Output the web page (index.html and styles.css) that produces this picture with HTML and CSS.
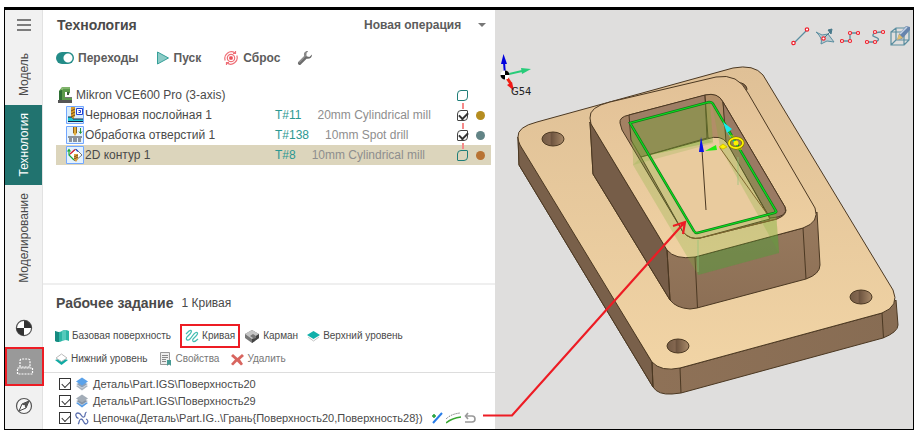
FILE: index.html
```html
<!DOCTYPE html>
<html lang="ru">
<head>
<meta charset="utf-8">
<title>Технология</title>
<link rel="stylesheet" href="styles.css">
</head>
<body>
<div class="app">
  <nav class="sidebar">
    <button class="menu" aria-label="Меню"><svg width="16" height="14" viewBox="0 0 16 14"><path d="M1 2h14M1 7h14M1 12h14" stroke="#555" stroke-width="1.6"/></svg></button>
    <button class="tab tab-model"><span>Модель</span></button>
    <button class="tab tab-tech active"><span>Технология</span></button>
    <button class="tab tab-sim"><span>Моделирование</span></button>
    <div class="tools">
      <button class="tool" aria-label="Система координат"><svg width="18" height="18" viewBox="0 0 18 18"><circle cx="9" cy="9" r="7.6" fill="#fff" stroke="#555" stroke-width="1.2"/><path d="M9 9V1.4A7.6 7.6 0 0 1 16.600 9ZM9 9v7.600A7.600 7.600 0 0 1 1.400 9Z" fill="#333"/></svg></button>
      <button class="tool current" aria-label="Рабочее задание"><svg width="18" height="20" viewBox="0 0 18 20" fill="none" stroke="#fff" stroke-width="1.200" stroke-dasharray="2 1"><path d="M4 10V4q0-2 2-2h6q2 0 2 2v6z"/><path d="M1.500 11h15v6h-15z"/></svg></button>
      <button class="tool" aria-label="Навигация"><svg width="18" height="18" viewBox="0 0 18 18"><circle cx="9" cy="9" r="7.500" fill="#f7f7f7" stroke="#555" stroke-width="1.200"/><path d="M14 4 11 11 4 14 7 7Z" fill="#fff" stroke="#444"/><path d="M14 4 11 11 7 7Z" fill="#555"/><circle cx="9" cy="9" r="1" fill="#fff"/></svg></button>
    </div>
  </nav>

  <main class="panel">
    <section class="operations">
      <header class="head">
        <h1>Технология</h1>
        <label class="new-op">
          <select aria-label="Новая операция"><option>Новая операция</option></select>
          <svg width="8" height="4" viewBox="0 0 8 4"><path d="M0 0h8L4 4Z" fill="#777"/></svg>
        </label>
      </header>
      <div class="actions">
        <label class="action"><input type="checkbox" class="switch" checked>Переходы</label>
        <button class="action"><svg width="14" height="14" viewBox="0 0 14 14"><path d="M1.500 1v12l11-6Z" fill="#8ccbc6" stroke="#35a099"/></svg>Пуск</button>
        <button class="action reset"><svg width="16" height="16" viewBox="0 0 16 16" fill="none" stroke="#ef7078" stroke-width="1.200"><path d="M2.200 10.500A6.500 6.500 0 0 1 12 3M13.800 5.500A6.500 6.500 0 0 1 4 13"/><circle cx="8" cy="8" r="3.700"/><circle cx="8" cy="8" r="1.500" fill="#e9434f"/><path d="M12.500 1v2.500H10M3.500 15v-2.500H6"/></svg>Сброс</button>
        <button class="action" aria-label="Настройки"><svg width="16" height="16" viewBox="0 0 16 16"><path d="M11 1C8 .8 6.300 3.500 7.200 6L1 12.200Q.4 15 3.300 15L9.600 8.700C12.500 9.400 15.200 7.500 15 4.500L12.300 7 9.500 6.200 9.300 3.700Z" fill="#6c6c6c"/><path d="M10 2C8 2.500 7.500 4 8.200 6.200L2 12.600" stroke="#aaa" fill="none"/></svg></button>
      </div>

      <ul class="tree">
        <li class="row machine">
          <svg class="pic" width="17" height="18" viewBox="0 0 17 18"><path d="M2 5 5 1h8v6l-2 1V6H8v6h7v3H2Z" fill="#5b9a4b"/><path d="M2 5 5 4v11H2Z" fill="#2e6f34"/><path d="M5 4V2h8" stroke="#a5cd8c" fill="none"/><path d="M1 14h14v3H1z" fill="#555"/><path d="M8 11h7v1H8z" fill="#777"/><path d="M10 6h2v3h-2z" fill="#385d3a"/></svg>
          <span class="name">Mikron VCE600 Pro (3-axis)</span>
          <span class="tooling"></span>
          <input type="checkbox" class="leaf" aria-label="Mikron VCE600 Pro">
        </li>
        <li class="row">
          <svg class="pic" width="18" height="18" viewBox="0 0 18 18"><path d="M.5.5h17v17H.500z" fill="#d9edfc" stroke="#72a7ff"/><path d="M2 15V11h5v2h10v2Z" fill="#20c8d4"/><path d="M2 11h5v2h10M2 15.500h15" stroke="#124" fill="none"/><path d="M10.500 2.500h6v6h-6z" fill="#fff" stroke="#2340d0"/><path d="M12.500 4.500h2v2h-2" stroke="#2340d0" fill="none"/><path d="M5 1h4v9l-2 3-2-3Z" fill="#d89b2b"/><path d="m5 5 4-2M5 8l4-2M5 11l4-2" stroke="#76501e"/></svg>
          <span class="name">Черновая послойная 1</span>
          <span class="tooling"><b>T#11</b>20mm Cylindrical mill</span>
          <input type="checkbox" class="leaf linked" checked aria-label="Черновая послойная 1">
          <i class="dot gold"></i>
        </li>
        <li class="row">
          <svg class="pic" width="18" height="18" viewBox="0 0 18 18"><path d="M.5.500h17v17H.500z" fill="#e4f2fd" stroke="#72a7ff"/><path d="M2 10h14v2h-1v4h-3v-4h-1v4H7v-4H6v4H3v-4H2Z" fill="#8b929b"/><path d="M7 1h4v6l-2 3-2-3Z" fill="#dfac3b"/><path d="M7.500 1v6M10.500 1v6" stroke="#8a601e"/><path d="M14.500 2v5m-1.500-1.500 1.500 2 1.500-2" stroke="#26953b" fill="none"/></svg>
          <span class="name">Обработка отверстий 1</span>
          <span class="tooling"><b>T#138</b>10mm Spot drill</span>
          <input type="checkbox" class="leaf linked" checked aria-label="Обработка отверстий 1">
          <i class="dot slate"></i>
        </li>
        <li class="row selected">
          <svg class="pic" width="18" height="18" viewBox="0 0 18 18"><path d="M.5.500h17v17H.500z" fill="#e4f2fd" stroke="#72a7ff"/><path d="M3 9 10 3l6 6-7 6Z" fill="#fff" stroke="#555" stroke-width=".8"/><path d="M3 4v5l5 5M1.500 5.500 3 3.500l1.500 2" fill="none" stroke="#18a83c" stroke-width="1.200"/><path d="m4 8 5-4.500" stroke="#d23" stroke-width="1.200"/><path d="m10 3.500 2 2" stroke="#2450d0" stroke-width="1.300"/><path d="M8 8h4v5l-2 3-2-3Z" fill="#dfa03b"/><path d="m8 11 4-2m-4 4 4-2" stroke="#76501e"/></svg>
          <span class="name">2D контур 1</span>
          <span class="tooling"><b>T#8</b>10mm Cylindrical mill</span>
          <input type="checkbox" class="leaf linked" aria-label="2D контур 1">
          <i class="dot copper"></i>
        </li>
      </ul>
    </section>

    <section class="job">
      <header class="job-head"><h2>Рабочее задание</h2><span>1 Кривая</span></header>
      <div class="commands">
        <button class="cmd"><svg width="14" height="14" viewBox="0 0 14 14"><path d="M0 2q4 2 7 0t7 0v10q-4-2-7 0t-7 0Z" fill="#2db5a5"/><path d="M0 2q2 1 4 .900v10Q2 13 0 12Z" fill="#168a80"/><path d="M7 2q2-1.500 4-1v10q-2 0-4 1Z" fill="#55cabc"/></svg>Базовая поверхность</button>
        <button class="cmd marked"><svg width="14" height="14" viewBox="0 0 14 14"><path d="M1 5 4 2C7 0 7 3 5 5L2 8C0 11 3 12 5 10L9 5C12 2 14 4 11 7L8 10C7 13 9 14 13 10" fill="none" stroke="#45bdb2" stroke-width="1.200"/></svg>Кривая</button>
        <button class="cmd pocket"><svg width="15" height="14" viewBox="0 0 15 14"><path d="M0 5 7 1l7 4v4l-7 5-7-5Z" fill="#777"/><path d="M0 5 7 1l7 4-3 2-3-2-3 2 3 2-1 1Z" fill="#c5c5c5"/><path d="M7 10v4l7-5V5l-3 2v2l-3 1Z" fill="#444"/></svg>Карман</button>
        <button class="cmd"><svg width="13" height="12" viewBox="0 0 13 12"><path d="m1 7 5.500 4L12 7" fill="#fff" stroke="#c4c4c4"/><path d="M0 5 6.500 1 13 5 6.500 9Z" fill="#10b0aa"/></svg>Верхний уровень</button>
      </div>
      <div class="commands">
        <button class="cmd"><svg width="13" height="12" viewBox="0 0 13 12"><path d="m0 7 6.500-2L13 7l-6.500 5Z" fill="#10aaa3"/><path d="m1 5 5.500-4L12 5 6.500 8.500Z" fill="#fff" stroke="#bbb"/></svg>Нижний уровень</button>
        <button class="cmd dim"><svg width="13" height="14" viewBox="0 0 13 14"><path d="M1.500.500h9v12h-9z" fill="#eee" stroke="#999"/><path d="M3 3.500h6M3 5.500h6M3 7.500h4M3 9.500h4" stroke="#888"/><path d="M8 8h4v6l-2-2-2 2Z" fill="#479b94"/></svg>Свойства</button>
        <button class="cmd dim"><svg width="13" height="13" viewBox="0 0 13 13"><path d="m2 1 4.500 4L11 1l2 2-4 3.500L12 11l-2 1.500-4-4-4 4L0 11l4-4.500L0 3Z" fill="#d8655f"/></svg>Удалить</button>
      </div>
      <ul class="items">
        <li><label><input type="checkbox" class="box" checked><svg width="14" height="14" viewBox="0 0 14 14"><path d="m1 9 6-3 6 3-6 4.500Z" fill="#a9b4c0"/><path d="m1 7 6-3 6 3-6 4Z" fill="#8ca0b8" stroke="#fff" stroke-width=".5"/><path d="m1 4.500 6-4 6 4-6 4Z" fill="#5aa2ea"/></svg>Деталь\Part.IGS\Поверхность20</label></li>
        <li><label><input type="checkbox" class="box" checked><svg width="14" height="14" viewBox="0 0 14 14"><path d="m1 9 6-3 6 3-6 4.500Z" fill="#559be5"/><path d="m1 7 6-3 6 3-6 4Z" fill="#8593a4" stroke="#fff" stroke-width=".5"/><path d="m1 4.500 6-4 6 4-6 4Z" fill="#a3adb8"/></svg>Деталь\Part.IGS\Поверхность29</label></li>
        <li><label><input type="checkbox" class="box" checked><svg width="14" height="14" viewBox="0 0 14 14"><path d="M3.500 7.500C0 6 0 2 3 2c4 0 3 5 6 4 2-1 0-4 2.500-5M3 13c2-1 0-4 3-5 3 0 2 5 5 5 2.500-1 2.500-4 0-5" fill="none" stroke="#5b6fae" stroke-width="1.300"/></svg>Цепочка(Деталь\Part.IG..\Грань{Поверхность20,Поверхность28})</label>
          <span class="item-tools">
            <button aria-label="Сторона"><svg width="12" height="12" viewBox="0 0 12 12"><path d="m2 11 9-10" stroke="#287de8" stroke-width="2"/><path d="M1 4h4M3 2v4" stroke="#24a13a" stroke-width="1.500"/></svg></button>
            <button aria-label="Смещение"><svg width="15" height="12" viewBox="0 0 15 12" fill="none"><path d="M0 11Q6 6 15 5" stroke="#36a52f" stroke-width="1.500"/><path d="M0 7Q5 2 14 1" stroke="#555" stroke-dasharray="1 1"/></svg></button>
            <button aria-label="Обратить"><svg width="12" height="12" viewBox="0 0 12 12" fill="none" stroke="#999" stroke-width="1.600"><path d="M2 4h6q3 0 3 3t-3 3H1"/><path d="M4 1 1.500 4 4 7"/></svg></button>
          </span></li>
      </ul>
    </section>
  </main>

  <section class="viewer">
    <svg class="scene" viewBox="495 10 418 419" preserveAspectRatio="xMinYMin meet" role="img" aria-label="3D модель детали">
      <defs>
        <linearGradient id="top" x1="0" y1="0" x2="0" y2="1"><stop offset="0" stop-color="#dfc096"/><stop offset="1" stop-color="#f1d4a5"/></linearGradient>
        <linearGradient id="boss" x1="0" y1="0" x2="0" y2="1"><stop offset="0" stop-color="#e2c197"/><stop offset="1" stop-color="#efd1a2"/></linearGradient>
        <linearGradient id="front" x1="0" y1="0" x2="1" y2="0"><stop offset="0" stop-color="#927459"/><stop offset="1" stop-color="#876c53"/></linearGradient>
        <linearGradient id="bossFront" x1="0" y1="0" x2="0" y2="1"><stop offset="0" stop-color="#a38466"/><stop offset="1" stop-color="#8c6f55"/></linearGradient>
        <linearGradient id="hole" x1="0" y1="0" x2="1" y2="0"><stop offset="0" stop-color="#735b45"/><stop offset=".38" stop-color="#846750"/><stop offset=".4" stop-color="#6a513d"/><stop offset="1" stop-color="#aa8b6a"/></linearGradient>
      </defs>
      <g stroke="#4b3822" stroke-width="1" stroke-linejoin="round">
        <path d="M518 137 519 165 653 387Q658 395 672 394L681 393 883 338Q898 332 898 325L896 300 882 313 680 368 652 362Z" fill="url(#front)"/>
        <path d="M518 137 519 165 653 387 652 362Z" fill="#79604a"/>
        <path d="M518 137Q517 127 537 122L733 68Q754 64 763 75L893 290Q900 306 882 313L680 368Q661 372 652 362L520 145Q518 141 518 137Z" fill="url(#top)"/>
        <path d="M680 368 681 393M882 313 883.500 338M652 362 653 387" fill="none"/>
        <ellipse cx="553" cy="139" rx="11" ry="7" fill="url(#hole)"/>
        <ellipse cx="678" cy="346" rx="11" ry="7" fill="url(#hole)"/>
        <ellipse cx="861" cy="297" rx="11" ry="7" fill="url(#hole)"/>
        <ellipse cx="736" cy="89" rx="11" ry="7" fill="#7d6249"/>
        <path d="M590 122 593 174 670 300Q676 308 690 309L697 308 806 279Q820 274 820 265L817 212 803 228 695 257 667 250Z" fill="url(#bossFront)"/>
        <path d="M590 122 593 174 670 300 667 250Z" fill="#765d48"/>
        <path d="M590 118Q589 107 610 102L716 77Q738 73 748 93L815 208Q820 222 803 228L695 257Q675 260 667 250L591 124Z" fill="url(#boss)"/>
        <path d="M667 250 670 300M695 257 697.500 308M803 228 806 279" fill="none"/>
        <path d="M620 123Q619 117 629 115L706 95Q718 93 723 102L785 207Q789 214 777 219L700 238Q690 240 683 232L622 130Z" fill="#a38163"/>
        <path d="M629 115 631 140 641 157 707 138 705 95Z" fill="#9e7e65"/>
        <path d="M705 95 708 138 727 142 723 102Q718 92 705 95Z" fill="#b28e68"/>
        <path d="M723 102 726 142 770 218Q789 217 785 207Z" fill="#9a7a63"/>
        <path d="M641 157 707 139Q721 134 727 143L770 219 700 238Q690 240 683 232Z" fill="#e9cb9e"/>
      </g>
      <g fill="#77ae35">
        <path d="M630 123 710 102 713 142 641 157 633 146Z" opacity=".36"/>
        <path d="M633 157 630 123 695 233 698 275 633 165Z" opacity=".25"/>
        <path d="M641 157 707 139 714 143 633 165Z" opacity=".2"/>
        <path d="M712 103 776 212 779 253 720 147Z" opacity=".25"/>
        <path d="M695 233 776 212 779 253 698 275Z" opacity=".25"/>
        <path d="M696 257 778 235 779 253 698 275Z" opacity=".3" fill="#389440"/>
      </g>
      <path d="M720 148 770 218M683 232Q690 240 700 238L777 219" fill="none" stroke="#80672f"/>
      <path d="M738 157v28M698 240v32" stroke="#8fc47a" opacity=".7"/>
      <path d="M630 123 709 102Q712 102 713 104L776 211Q777 212 774 213L697 233Q695 233 694 231Z" fill="none" stroke="#137b19" stroke-width="2.600"/>
      <path d="M630 123 709 102Q712 102 713 104L776 211Q777 212 774 213L697 233Q695 233 694 231Z" fill="none" stroke="#0be020" stroke-width="1.200"/>
      <path d="M702 150 706 210" stroke="#4b3822"/>
      <path d="M701 137 704 152H699Z" fill="#0b10e8"/>
      <path d="m705 151 11-6 1 5Z" fill="#20ed10"/>
      <path d="m728 133 6 9" stroke="#13dede"/><path d="m723 122 9 7-5 4Z" fill="#16eded"/>
      <path d="m719 147 4-3 4 3-4 2ZM729 136h5M737 149h5" fill="#fff100" stroke="#d6c400"/>
      <ellipse cx="736" cy="143" rx="7" ry="5" fill="none" stroke="#7a7000" stroke-width="3"/>
      <ellipse cx="736" cy="143" rx="7" ry="5" fill="none" stroke="#fff000" stroke-width="1.800"/>
      <circle cx="736" cy="143" r="2.500" fill="#fff000"/>
      <g>
        <path d="m505 75-1-13" stroke="#00d" stroke-width="2"/><path d="m503.500 54 3.500 10h-6Z" fill="#00d"/>
        <path d="m505 75 17-4" stroke="#27cc79" stroke-width="2"/><path d="m531 69-9 5-1-6Z" fill="#27cc79"/>
        <path d="m505 75 6 9" stroke="#e21" stroke-width="3"/><path d="m514 91-7-6 5-3Z" fill="#f01818"/>
        <circle cx="505" cy="75" r="4.500" fill="#fff"/><path d="M505 75v-4.500a4.500 4.500 0 0 1 4.500 4.500ZM505 75v4.500a4.500 4.500 0 0 1-4.500-4.500Z"/>
        <text x="511" y="95" class="axis-label">G54</text>
      </g>
      <path d="M483 415.500H512L684 223M673 226 685 222 683 234" fill="none" stroke="#ed1c24" stroke-width="2.200"/>
    </svg>
    <div class="view-tools">
      <button aria-label="Отрезок"><svg width="20" height="20" viewBox="0 0 20 20"><path d="M4 17 17 4" stroke="#5b8ea0" stroke-width="1.300"/><g fill="#fff" stroke="#f0202c" stroke-width="1.200"><circle cx="3.500" cy="17" r="1.700"/><circle cx="17" cy="3.500" r="1.700"/></g></svg></button>
      <button aria-label="Плоскость"><svg width="20" height="20" viewBox="0 0 20 20"><path d="m1 6 6 3 6-1 6 8-7-1-6 3Q8 12 1 6Z" fill="#bccbd0" stroke="#5b8ea0"/><path d="m9 12 7-7m-3-1 4-1-1 5Z" fill="#48798b" stroke="#48798b"/><circle cx="8.500" cy="12.500" r="1.700" fill="#fff" stroke="#f0202c" stroke-width="1.200"/></svg></button>
      <button aria-label="Ломаная"><svg width="20" height="20" viewBox="0 0 20 20"><path d="M2 15h8V7h8" fill="none" stroke="#5b8ea0" stroke-width="1.300"/><g fill="#fff" stroke="#f0202c" stroke-width="1.200"><circle cx="2" cy="15" r="1.500"/><circle cx="10" cy="15" r="1.500"/><circle cx="10" cy="7" r="1.500"/><circle cx="18" cy="7" r="1.500"/></g></svg></button>
      <button aria-label="Сплайн"><svg width="20" height="20" viewBox="0 0 20 20"><path d="M2 16h8c8-3 0-5-2-6-1-3 4-4 10-4" fill="none" stroke="#5b8ea0" stroke-width="1.300"/><g fill="#fff" stroke="#f0202c" stroke-width="1.200"><circle cx="2" cy="16" r="1.500"/><circle cx="10" cy="16" r="1.500"/><circle cx="10" cy="6" r="1.500"/><circle cx="18" cy="6" r="1.500"/></g></svg></button>
      <button aria-label="Эскиз"><svg width="20" height="20" viewBox="0 0 20 20"><path d="M1 6h13v13H1zM1 6l5-4h13l-5 4M19 2v12l-5 5M6 2v12h13M6 14l-5 5" fill="none" stroke="#5b8ea0" stroke-width="1.200"/><path d="m7 14 2-6 7-8 4 1v3l-8 9Z" fill="#6684ad"/><path d="m7 14 2-6 4 4Z" fill="#e0bd70"/><path d="m10 8 7-7" stroke="#c5d3e5" stroke-width="1.600"/></svg></button>
    </div>
  </section>
</div>
</body>
</html>
```
FILE: styles.css
```css
* { box-sizing: border-box; }
body {
  margin: 0;
  padding: 7px 5px 4px 4px;
  background: #fff;
  color: #4a4a4a;
  font: 12px/20px "Liberation Sans", Arial, sans-serif;
}
button, select, input { font: inherit; color: inherit; margin: 0; }
button { border: 0; padding: 0; background: none; }
ul { list-style: none; margin: 0; padding: 0; }
h1, h2 { margin: 0; font-size: 14px; line-height: 20px; }
svg { display: block; flex: none; }

.app {
  display: flex;
  min-height: calc(100vh - 11px);
  border: 1px solid #000;
  border-top-width: 3px;
}

.sidebar {
  display: flex;
  flex-direction: column;
  flex: none;
  width: 38px;
  background: #f1f1f1;
  border-right: 1px solid #e2e2e2;
}
.menu, .tool { display: flex; align-items: center; justify-content: center; }
.menu { height: 30px; }
.tab { display: flex; justify-content: center; align-items: center; }
.tab span { writing-mode: vertical-rl; transform: rotate(180deg); font-size: 12px; }
.tab-model { height: 65px; padding-top: 4px; }
.tab-tech { height: 80px; }
.tab-sim { height: 106px; }
.tab.active { background: #21736f; color: #fff; }
.tools { margin-top: auto; padding-bottom: 4px; }
.tool { width: 100%; height: 39px; }
.tool.current { width: 39px; position: relative; background: #999; border: 2px solid #ed1c24; }

.panel { display: flex; flex-direction: column; flex: 0 0 452px; min-width: 0; background: #fff; }
.operations { flex: 1; padding-top: 5px; }
.head { display: flex; justify-content: space-between; padding: 0 9px 0 14px; }
.new-op { display: flex; align-items: center; gap: 16px; }
.new-op select { appearance: none; border: 0; padding: 0; background: none; font-weight: bold; color: #5c5c5c; }
.actions { display: flex; align-items: center; height: 20px; margin: 13px 0 17px 13px; gap: 17px; }
.action { display: flex; align-items: center; gap: 4px; font-weight: bold; color: #5c5c5c; }
.reset { margin-left: 5px; }
.switch {
  appearance: none;
  width: 18px;
  height: 12px;
  border-radius: 6px;
  background: radial-gradient(circle at 12px 6px, #fff 4px, #248c88 5px);
}

.tree { padding: 0 4px 0 13px; }
.row {
  display: grid;
  grid-template-columns: 18px 191px 1fr 12px 16px;
  align-items: center;
  height: 20px;
  padding-left: 10px;
  padding-right: 6px;
}
.row.machine { padding-left: 1px; grid-template-columns: 18px 200px 1fr 12px 16px; }
.row.selected { background: #dcd5bc; }
.name { padding-left: 1px; white-space: nowrap; }
.tooling { color: #8e8e8e; white-space: nowrap; }
.tooling b { margin-right: 16px; font-weight: normal; color: #2c9892; }
.leaf {
  appearance: none;
  position: relative;
  width: 11px;
  height: 11px;
  border: 1px solid #207e78;
  border-radius: 4px 1px 4px 1px;
}
.leaf:checked { border-color: #444; }
.leaf:checked::after {
  content: "";
  position: absolute;
  left: 1px;
  top: 1px;
  width: 7px;
  height: 4px;
  border: solid #333;
  border-width: 0 0 2px 2px;
  transform: rotate(-45deg);
}
.leaf.linked::before {
  content: "";
  position: absolute;
  left: 4px;
  bottom: 11px;
  width: 2px;
  height: 6px;
  background: #f58a8a;
}
.dot { justify-self: end; width: 9px; height: 9px; border-radius: 50%; }
.gold { background: #b58d20; }
.slate { background: #628486; }
.copper { background: #b87333; }

.job { border-top: 2px solid #efefef; }
.job-head { display: flex; align-items: center; gap: 8px; padding: 8px 13px; }
.commands { display: flex; align-items: center; height: 24px; padding-left: 12px; gap: 9px; }
.commands + .commands { margin-bottom: 2px; height: 22px; gap: 12px; }
.job-head + .commands { margin-top: 3px; }
.cmd { display: flex; align-items: center; gap: 3px; height: 20px; font-size: 10px; white-space: nowrap; }
.cmd.marked { height: 24px; padding: 0 3px; border: 2px solid #ed1c24; }
.cmd.pocket { margin-left: -4px; }
.cmd.dim { color: #777; }
.items { border-top: 1px solid #ddd; padding: 2px 0 3px 16px; font-size: 11px; }
.items li { display: flex; align-items: center; gap: 8px; height: 17px; }
.items label { display: flex; align-items: center; gap: 4px; white-space: nowrap; }
.box { appearance: none; width: 12px; height: 12px; border: 1px solid #333; background: #fff; position: relative; }
.box:checked::after {
  content: "";
  position: absolute;
  left: 2px;
  top: 2px;
  width: 7px;
  height: 4px;
  border: solid #333;
  border-width: 0 0 1px 1px;
  transform: rotate(-45deg);
}
.item-tools { display: flex; gap: 3px; }

.viewer { position: relative; flex: 1; min-width: 0; background: #dfdedd; }
.scene { width: 100%; overflow: visible; }
.axis-label { font: 10px "DejaVu Sans", sans-serif; fill: #222; }
.view-tools { position: absolute; top: 16px; right: 3px; display: flex; gap: 5px; }
```
